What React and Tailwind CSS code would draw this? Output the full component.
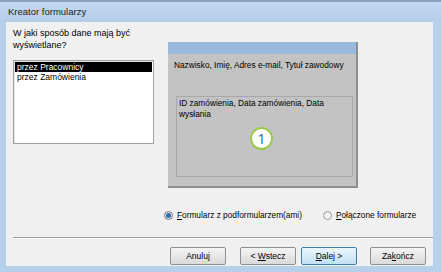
import React from "react";

const font = { fontFamily: '"Liberation Sans", Arial, sans-serif' };

const Btn = ({ children, focus }) => (
  <button
    className={
      focus
        ? "w-[56px] h-[18px] rounded-[2px] border border-[#3c7fb1] bg-gradient-to-b from-[#eaf6fd] to-[#c4e0f3] text-[8.5px] text-black leading-none"
        : "w-[56px] h-[18px] rounded-[2px] border border-[#8e8f8f] bg-gradient-to-b from-[#f4f4f4] to-[#dadada] text-[8.5px] text-black leading-none"
    }
  >
    {children}
  </button>
);

export default function App() {
  return (
    <div
      className="w-[441px] h-[272px] bg-[#b7d0ea] flex flex-col border-t-2 border-[#8aa4c2] text-[9px] text-black"
      style={font}
    >
      {/* Title bar */}
      <div className="h-[20px] flex items-center pl-[8px] bg-gradient-to-b from-[#c4d9f0] to-[#b5cde8]">
        <span className="text-[9.5px] text-[#1e1e1e]">Kreator formularzy</span>
      </div>

      {/* Client area */}
      <div className="ml-[6px] mr-[8px] mb-[6px] flex-1 bg-[#f0f0f0] flex flex-col">
        <div className="flex">
          {/* Left column */}
          <div className="ml-[7px] w-[141px] flex flex-col">
            <p className="mt-[5px] leading-[12px]">
              W jaki sposób dane mają być
              <br />
              wyświetlane?
            </p>
            <div className="mt-[9px] h-[84px] bg-white border border-[#a0a0a0] shadow-[inset_1px_1px_0_#e3e3e3] p-px text-[8.5px]">
              <div className="h-[10px] bg-black text-white leading-[10px] px-[2px]">przez Pracownicy</div>
              <div className="h-[11px] leading-[11px] px-[2px]">przez Zamówienia</div>
            </div>
          </div>

          {/* Preview panel */}
          <div className="ml-[14px] mt-[20px] w-[190px] h-[146px] bg-[#c3c3c3] flex flex-col border-r-2 border-b-2 border-[#8e8e8e] text-[8.3px]">
            <div className="h-[12px] bg-[#9bb9dd]"></div>
            <div className="mt-[6px] ml-[6px] leading-[11px] whitespace-nowrap">Nazwisko, Imię, Adres e-mail, Tytuł zawodowy</div>
            <div className="mt-[25px] ml-[8px] mr-[3px] h-[81px] border border-[#a9a9a9] flex flex-col px-[2px] pt-[1px]">
              <div className="leading-[11px]">
                ID zamówienia, Data zamówienia, Data
                <br />
                wysłania
              </div>
              <div className="mt-[7px] ml-[71px] w-[23px] h-[23px] rounded-full bg-white border-[2px] border-[#9cc84e] flex items-center justify-center">
                <span className="text-[15px] leading-none text-[#3b6aa8]" style={{ fontFamily: '"Open Sans", sans-serif' }}>1</span>
              </div>
            </div>
          </div>
        </div>

        {/* Radios */}
        <div className="mt-[21px] flex items-center text-[8.3px]">
          <div className="ml-[158px] flex items-center gap-[4px]">
            <span className="w-[9px] h-[9px] rounded-full border border-[#7a7a7a] bg-[#e6e6e6] flex items-center justify-center">
              <span className="w-[5px] h-[5px] rounded-full bg-[#2f6cb0]"></span>
            </span>
            <span>
              <u>F</u>ormularz z podformularzem(ami)
            </span>
          </div>
          <div className="ml-[21px] flex items-center gap-[4px]">
            <span className="w-[9px] h-[9px] rounded-full border border-[#9a9a9a] bg-gradient-to-br from-[#e8e8e8] to-[#f8f8f8]"></span>
            <span>
              <u>P</u>ołączone formularze
            </span>
          </div>
        </div>

        {/* Separator */}
        <div className="mt-[16px] ml-[7px] h-px bg-[#a0a0a0] border-b border-white box-content"></div>

        {/* Buttons */}
        <div className="mt-[8px] flex">
          <div className="ml-[164px]">
            <Btn>Anuluj</Btn>
          </div>
          <div className="ml-[14px]">
            <Btn>
              &lt; <u>W</u>stecz
            </Btn>
          </div>
          <div className="ml-[5px]">
            <Btn focus>
              <u>D</u>alej &gt;
            </Btn>
          </div>
          <div className="ml-[13px]">
            <Btn>
              Za<u>k</u>ończ
            </Btn>
          </div>
        </div>
      </div>
    </div>
  );
}
